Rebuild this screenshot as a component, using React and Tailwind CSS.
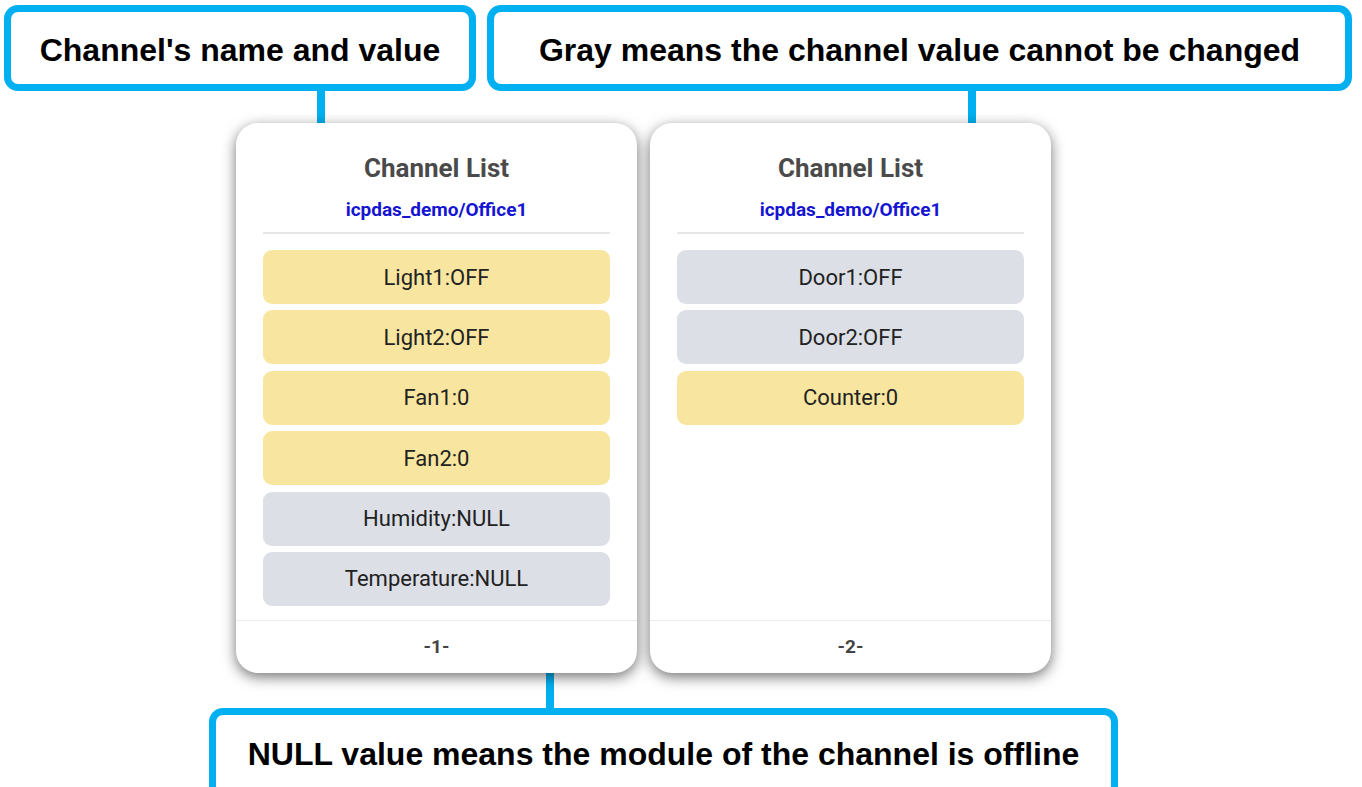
const cards = [
  {
    page: "-1-",
    rows: [
      { label: "Light1:OFF", editable: true },
      { label: "Light2:OFF", editable: true },
      { label: "Fan1:0", editable: true },
      { label: "Fan2:0", editable: true },
      { label: "Humidity:NULL", editable: false },
      { label: "Temperature:NULL", editable: false },
    ],
  },
  {
    page: "-2-",
    rows: [
      { label: "Door1:OFF", editable: false },
      { label: "Door2:OFF", editable: false },
      { label: "Counter:0", editable: true },
    ],
  },
];

const Callout = ({ className, children }) => (
  <div
    className={`flex items-center justify-center border-[7px] border-[#00b0f0] rounded-[14px] bg-white text-[32px] font-bold text-black font-['Liberation_Sans',Arial,sans-serif] ${className}`}
  >
    {children}
  </div>
);

const ChannelCard = ({ card }) => (
  <div className="relative z-10 w-[401px] h-[550px] bg-white rounded-[22px] shadow-[0_4px_14px_rgba(0,0,0,0.55)] flex flex-col font-['Roboto',sans-serif]">
    <div className="flex-1 px-[27px]">
      <div className="pt-[28px] text-center text-[26px] font-bold text-[#4a4a4a] leading-[34px]">
        Channel List
      </div>
      <div className="mt-[13px] text-center text-[19px] font-bold text-[#1414d2] leading-[24px]">
        icpdas_demo/Office1
      </div>
      <div className="mt-[10px] h-[2px] bg-[#e6e6e6]" />
      <div className="mt-[16px] flex flex-col gap-[6.4px]">
        {card.rows.map((row) => (
          <div
            key={row.label}
            className={`h-[54px] rounded-[9px] flex items-center justify-center text-[22px] text-[#222] ${
              row.editable ? "bg-[#f8e6a0]" : "bg-[#dcdfe6]"
            }`}
          >
            {row.label}
          </div>
        ))}
      </div>
    </div>
    <div className="h-[53px] border-t border-[#ececec] flex items-center justify-center text-[19px] font-bold text-[#444]">
      {card.page}
    </div>
  </div>
);

export default function App() {
  return (
    <div className="w-[1362px] h-[787px] bg-white overflow-hidden">
      <div className="flex pt-[5px] pl-[4px] gap-[11px]">
        <Callout className="w-[472px] h-[86px] pt-[3px]">Channel's name and value</Callout>
        <Callout className="w-[865px] h-[86px] pt-[3px]">
          Gray means the channel value cannot be changed
        </Callout>
      </div>

      <div className="flex h-[32px]">
        <div className="ml-[317px] w-[8px] bg-[#00b0f0]" />
        <div className="ml-[643px] w-[8px] bg-[#00b0f0]" />
      </div>

      <div className="flex pl-[236px] gap-[13px]">
        {cards.map((card) => (
          <ChannelCard key={card.page} card={card} />
        ))}
      </div>

      <div className="flex h-[35px]">
        <div className="ml-[546px] w-[8px] bg-[#00b0f0]" />
      </div>

      <Callout className="ml-[209px] w-[909px] h-[92px]">
        NULL value means the module of the channel is offline
      </Callout>
    </div>
  );
}
